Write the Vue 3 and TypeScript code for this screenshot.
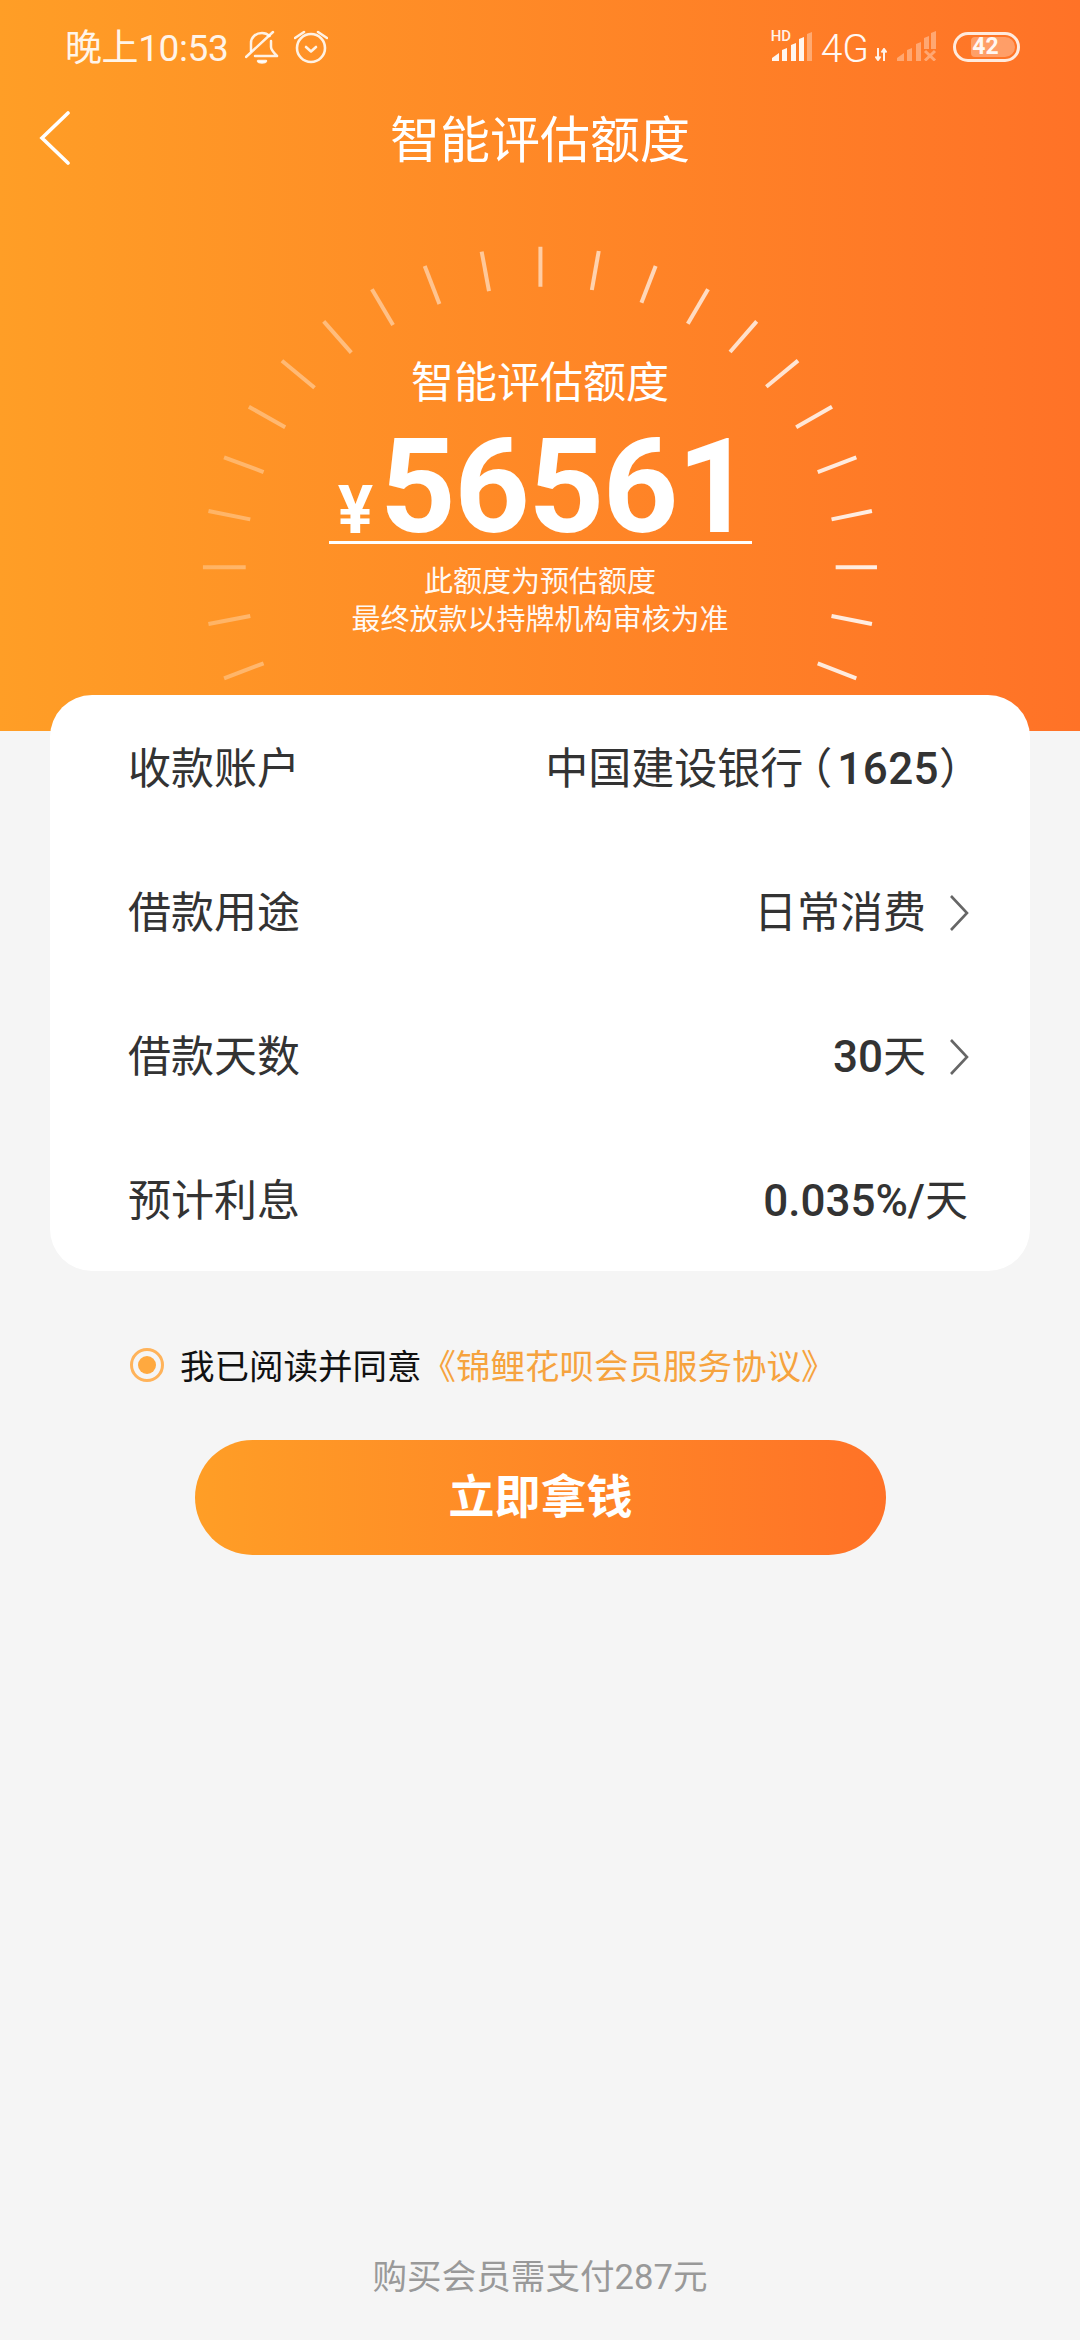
<script setup lang="ts">
const raw: number[][] = [
  [785, 80, 785, 200],
  [657, 95, 673, 213], [912, 93, 897, 210],
  [533, 138, 565, 252], [1036, 138, 1005, 248],
  [418, 208, 464, 315], [1150, 208, 1106, 311],
  [313, 304, 373, 398], [1256, 304, 1198, 396],
  [222, 422, 293, 503], [1346, 422, 1277, 500],
  [150, 560, 229, 622], [1420, 560, 1342, 622],
  [96, 712, 182, 756], [1473, 712, 1389, 756],
  [62, 873, 153, 898], [1507, 873, 1419, 898],
  [50, 1042, 143, 1042], [1518, 1042, 1428, 1042],
  [62, 1212, 153, 1188], [1507, 1212, 1419, 1188],
  [96, 1375, 182, 1330], [1473, 1375, 1389, 1330],
]
const ticks = raw.map(([a, b, c, d]) => ({
  x1: 180 + a / 2.178,
  y1: 220 + b / 3,
  x2: 180 + c / 2.178,
  y2: 220 + d / 3,
}))
</script>

<template>
  <div class="page">
    <header class="hero">
      <svg class="rays" width="1080" height="731" viewBox="0 0 1080 731" aria-hidden="true">
        <defs>
          <linearGradient id="rayFade" gradientUnits="userSpaceOnUse" x1="200" y1="0" x2="880" y2="0">
            <stop offset="0" stop-color="#fff" stop-opacity="0.28" />
            <stop offset="1" stop-color="#fff" stop-opacity="0.88" />
          </linearGradient>
        </defs>
        <path
          v-for="(t, i) in ticks"
          :key="i"
          :d="`M${t.x1} ${t.y1}L${t.x2 + 0.01} ${t.y2 + 0.01}`"
          stroke="url(#rayFade)"
          stroke-width="4"
          fill="none"
        />
      </svg>

      <div class="status">
        <div class="status-left">
          <span class="time">晚上10:53</span>
          <svg class="bell" width="34" height="34" viewBox="0 0 34 34" fill="none" stroke="#fff" stroke-opacity=".88" stroke-width="2.500" stroke-linecap="round" stroke-linejoin="round">
            <path d="M1 27 28 2" />
            <path d="M6 21V13C6 7 11 3 17 3c3 0 5.500 1 7.500 3" />
            <path d="M26 11v6c0 3 3 6 6 9H10" />
            <path d="M13 31h8c-1 2-7 2-8 0z" fill="#fff" />
          </svg>
          <svg class="alarm" width="34" height="34" viewBox="0 0 34 34" fill="none" stroke="#fff" stroke-opacity=".88" stroke-width="2.600" stroke-linecap="round" stroke-linejoin="round">
            <circle cx="17" cy="18" r="14" />
            <path d="M12 17l5 4.500 5-4.500" />
            <path d="M1 8l9-6M33 8l-9-6" />
          </svg>
        </div>
        <div class="status-right">
          <div class="sig-wrap">
            <span class="hd">HD</span>
            <svg width="41" height="30" viewBox="0 0 41 30" fill="#fff" fill-opacity=".92">
              <path d="M1 30v-3l7-5v8z" />
              <path d="M11 30V19l5-2v13z" />
              <path d="M20 30V14l5-2v18z" />
              <path d="M28 30V8l5-2v24z" />
              <path d="M36 30V3l5-2v29z" fill-opacity=".35" />
            </svg>
          </div>
          <span class="net">4G</span>
          <svg class="updown" width="12" height="13" viewBox="0 0 12 13" fill="none" stroke="#fff" stroke-opacity=".9" stroke-width="2">
            <path d="M3 0v11M.5 8.500 3 12l2.500-3.500" />
            <path d="M9 13V2M6.500 4.500 9 1l2.500 3.500" />
          </svg>
          <svg class="sig2" width="40" height="30" viewBox="0 0 40 30" fill="#fff" fill-opacity=".35">
            <path d="M0 30v-3l7-5v8z" />
            <path d="M10 30V19l5-2v13z" />
            <path d="M19 30V13l5-2v19z" />
            <path d="M27 18V7l5-2v13zM34 18V2l5-2v18z" />
            <path d="M28 20l10 9.500M38 20l-10 9.500" stroke="#fff" stroke-opacity=".35" stroke-width="3" fill="none" />
          </svg>
          <div class="battery">
            <span class="battery-fill"></span>
            <span class="battery-num">42</span>
          </div>
        </div>
      </div>

      <nav class="nav">
        <svg class="back" width="32" height="54" viewBox="0 0 32 54" fill="none" stroke="#fff" stroke-width="3.600" stroke-linecap="round" stroke-linejoin="miter">
          <path d="M29 2 3 27l26 25" />
        </svg>
        <h1 class="nav-title">智能评估额度</h1>
      </nav>

      <section class="quota">
        <div class="quota-title">智能评估额度</div>
        <div class="amount">
          <span class="yen">¥</span><span class="num">56561</span>
        </div>
        <p class="note">此额度为预估额度<br />最终放款以持牌机构审核为准</p>
      </section>
    </header>

    <section class="card">
      <div class="row">
        <span class="label">收款账户</span>
        <span class="value nowrap">中国建设银<span class="tight">行</span>（<b class="digits">1625</b>）</span>
      </div>
      <div class="row">
        <span class="label">借款用途</span>
        <span class="value with-arrow">日常消费
          <svg class="chev" width="20" height="38" viewBox="0 0 20 38" fill="none" stroke="#666" stroke-width="2.600"><path d="M2 2l16 17L2 36" /></svg>
        </span>
      </div>
      <div class="row">
        <span class="label">借款天数</span>
        <span class="value with-arrow"><span><b>30</b>天</span>
          <svg class="chev" width="20" height="38" viewBox="0 0 20 38" fill="none" stroke="#666" stroke-width="2.600"><path d="M2 2l16 17L2 36" /></svg>
        </span>
      </div>
      <div class="row">
        <span class="label">预计利息</span>
        <span class="value"><b>0.035%/</b>天</span>
      </div>
    </section>

    <div class="agree">
      <span class="radio"><span class="radio-dot"></span></span>
      <span class="agree-text">我已阅读并同意</span>
      <span class="agree-link">《锦鲤花呗会员服务协议》</span>
    </div>

    <button class="cta" type="button"><span class="cta-label">立即拿钱</span></button>

    <footer class="foot">购买会员需支付287元</footer>
  </div>
</template>

<style scoped>
.page {
  width: 1080px;
  height: 2340px;
  background: #f5f5f5;
  display: flex;
  flex-direction: column;
  font-family: "Roboto", "Noto Sans CJK SC", sans-serif;
  color: #333;
  overflow: hidden;
}
.hero {
  position: relative;
  height: 731px;
  flex: none;
  background: linear-gradient(90deg, #ff9e26 0%, #ff7227 100%);
  color: #fff;
}
.rays {
  position: absolute;
  left: 0;
  top: 0;
}
.status {
  position: relative;
  height: 96px;
  padding: 0 60px 0 65px;
  display: flex;
  align-items: center;
  justify-content: space-between;
}
.status-left {
  display: flex;
  align-items: center;
}
.time {
  font-size: 37px;
  line-height: 48px;
  color: #fff;
  opacity: 0.9;
  letter-spacing: -0.4px;
  margin-top: 2px;
}
.bell {
  margin: -2px 0 0 17px;
}
.alarm {
  margin: -2px 0 0 15px;
}
.status-right {
  display: flex;
  align-items: center;
}
.sig-wrap {
  position: relative;
  width: 41px;
  height: 30px;
  margin-bottom: 4px;
}
.sig-wrap svg {
  display: block;
}
.hd {
  position: absolute;
  left: 0;
  top: -2px;
  font-size: 15px;
  line-height: 14px;
  font-weight: 500;
  color: #fff;
  opacity: 0.9;
}
.net {
  margin: 2px 0 0 9px;
  font-size: 39px;
  line-height: 40px;
  font-weight: 300;
  color: #fff;
  opacity: 0.95;
}
.updown {
  margin: 12px 0 0 6px;
}
.sig2 {
  margin: 0 0 4px 10px;
}
.battery {
  position: relative;
  margin: 0 0 2px 16px;
  width: 67px;
  height: 30px;
  box-sizing: border-box;
  border: 3px solid rgba(255, 255, 255, 0.85);
  border-radius: 15px;
  display: flex;
  align-items: center;
  justify-content: center;
}
.battery-fill {
  position: absolute;
  left: 15px;
  top: 2px;
  bottom: 2px;
  right: 2px;
  border-radius: 4px 10px 10px 4px;
  background: rgba(255, 255, 255, 0.3);
}
.battery-num {
  position: relative;
  font-size: 23px;
  line-height: 24px;
  font-weight: 700;
  color: #fff;
  opacity: 0.92;
  margin-right: 2px;
}
.nav {
  position: relative;
  height: 84px;
  display: flex;
  align-items: center;
  justify-content: center;
}
.back {
  position: absolute;
  left: 39px;
  top: 15px;
}
.nav-title {
  margin: 6px 0 0;
  font-size: 50px;
  line-height: 78px;
  font-weight: 400;
  color: #fff;
}
.quota {
  position: relative;
  margin-top: 173px;
  display: flex;
  flex-direction: column;
  align-items: center;
}
.quota-title {
  font-size: 43px;
  line-height: 60px;
  color: #fff;
}
.amount {
  width: 423px;
  height: 126px;
  margin-top: 2px;
  border-bottom: 3px solid #fff;
  display: flex;
  align-items: flex-end;
  justify-content: center;
  font-weight: 700;
}
.yen {
  font-size: 66px;
  line-height: 62px;
  margin: 0 7px -1px 9px;
}
.num {
  font-size: 132px;
  line-height: 100px;
  letter-spacing: -1.500px;
  margin-bottom: 4px;
}
.note {
  margin: 19px 0 0;
  font-size: 29px;
  line-height: 38px;
  text-align: center;
  color: #fff;
  opacity: 0.95;
}
.card {
  position: relative;
  flex: none;
  margin: -36px 50px 0;
  background: #fff;
  border-radius: 42px;
  display: flex;
  flex-direction: column;
}
.row {
  height: 144px;
  padding: 0 62px 0 78px;
  display: flex;
  align-items: center;
  justify-content: space-between;
  font-size: 43px;
  color: #333;
}
.label,
.value {
  line-height: 60px;
  margin-top: 4px;
}
.value {
  font-size: 43px;
}
.value b {
  font-weight: 500;
  font-size: 44px;
}
.nowrap {
  white-space: nowrap;
  margin-right: -14px;
}
.tight {
  letter-spacing: -14px;
}
.digits {
  margin-left: 5px;
  letter-spacing: 0.4px;
}
.with-arrow {
  display: flex;
  align-items: center;
  gap: 23px;
}
.chev {
  display: block;
  margin-right: -1px;
}
.agree {
  margin: 69px 0 0 130px;
  height: 48px;
  display: flex;
  align-items: center;
  font-size: 34.500px;
}
.radio {
  width: 34px;
  height: 34px;
  box-sizing: border-box;
  border: 3px solid #ffb35a;
  border-radius: 50%;
  display: flex;
  align-items: center;
  justify-content: center;
  margin-top: 1px;
}
.radio-dot {
  width: 18px;
  height: 18px;
  border-radius: 50%;
  background: #ffa93f;
}
.agree-text {
  margin-left: 16px;
  color: #111;
}
.agree-link {
  color: #f6a33e;
}
.cta {
  display: block;
  margin: 52px 0 0 195px;
  width: 691px;
  height: 115px;
  border: 0;
  padding: 0;
  border-radius: 58px;
  background: linear-gradient(90deg, #ff9e26 0%, #ff7227 100%);
  color: #fff;
  font-family: inherit;
  font-size: 46px;
  font-weight: 700;
}
.cta-label {
  display: block;
  margin-top: -10px;
}
.foot {
  margin-top: auto;
  padding-bottom: 38px;
  text-align: center;
  font-size: 34.600px;
  line-height: 50px;
  color: #999;
}
</style>
